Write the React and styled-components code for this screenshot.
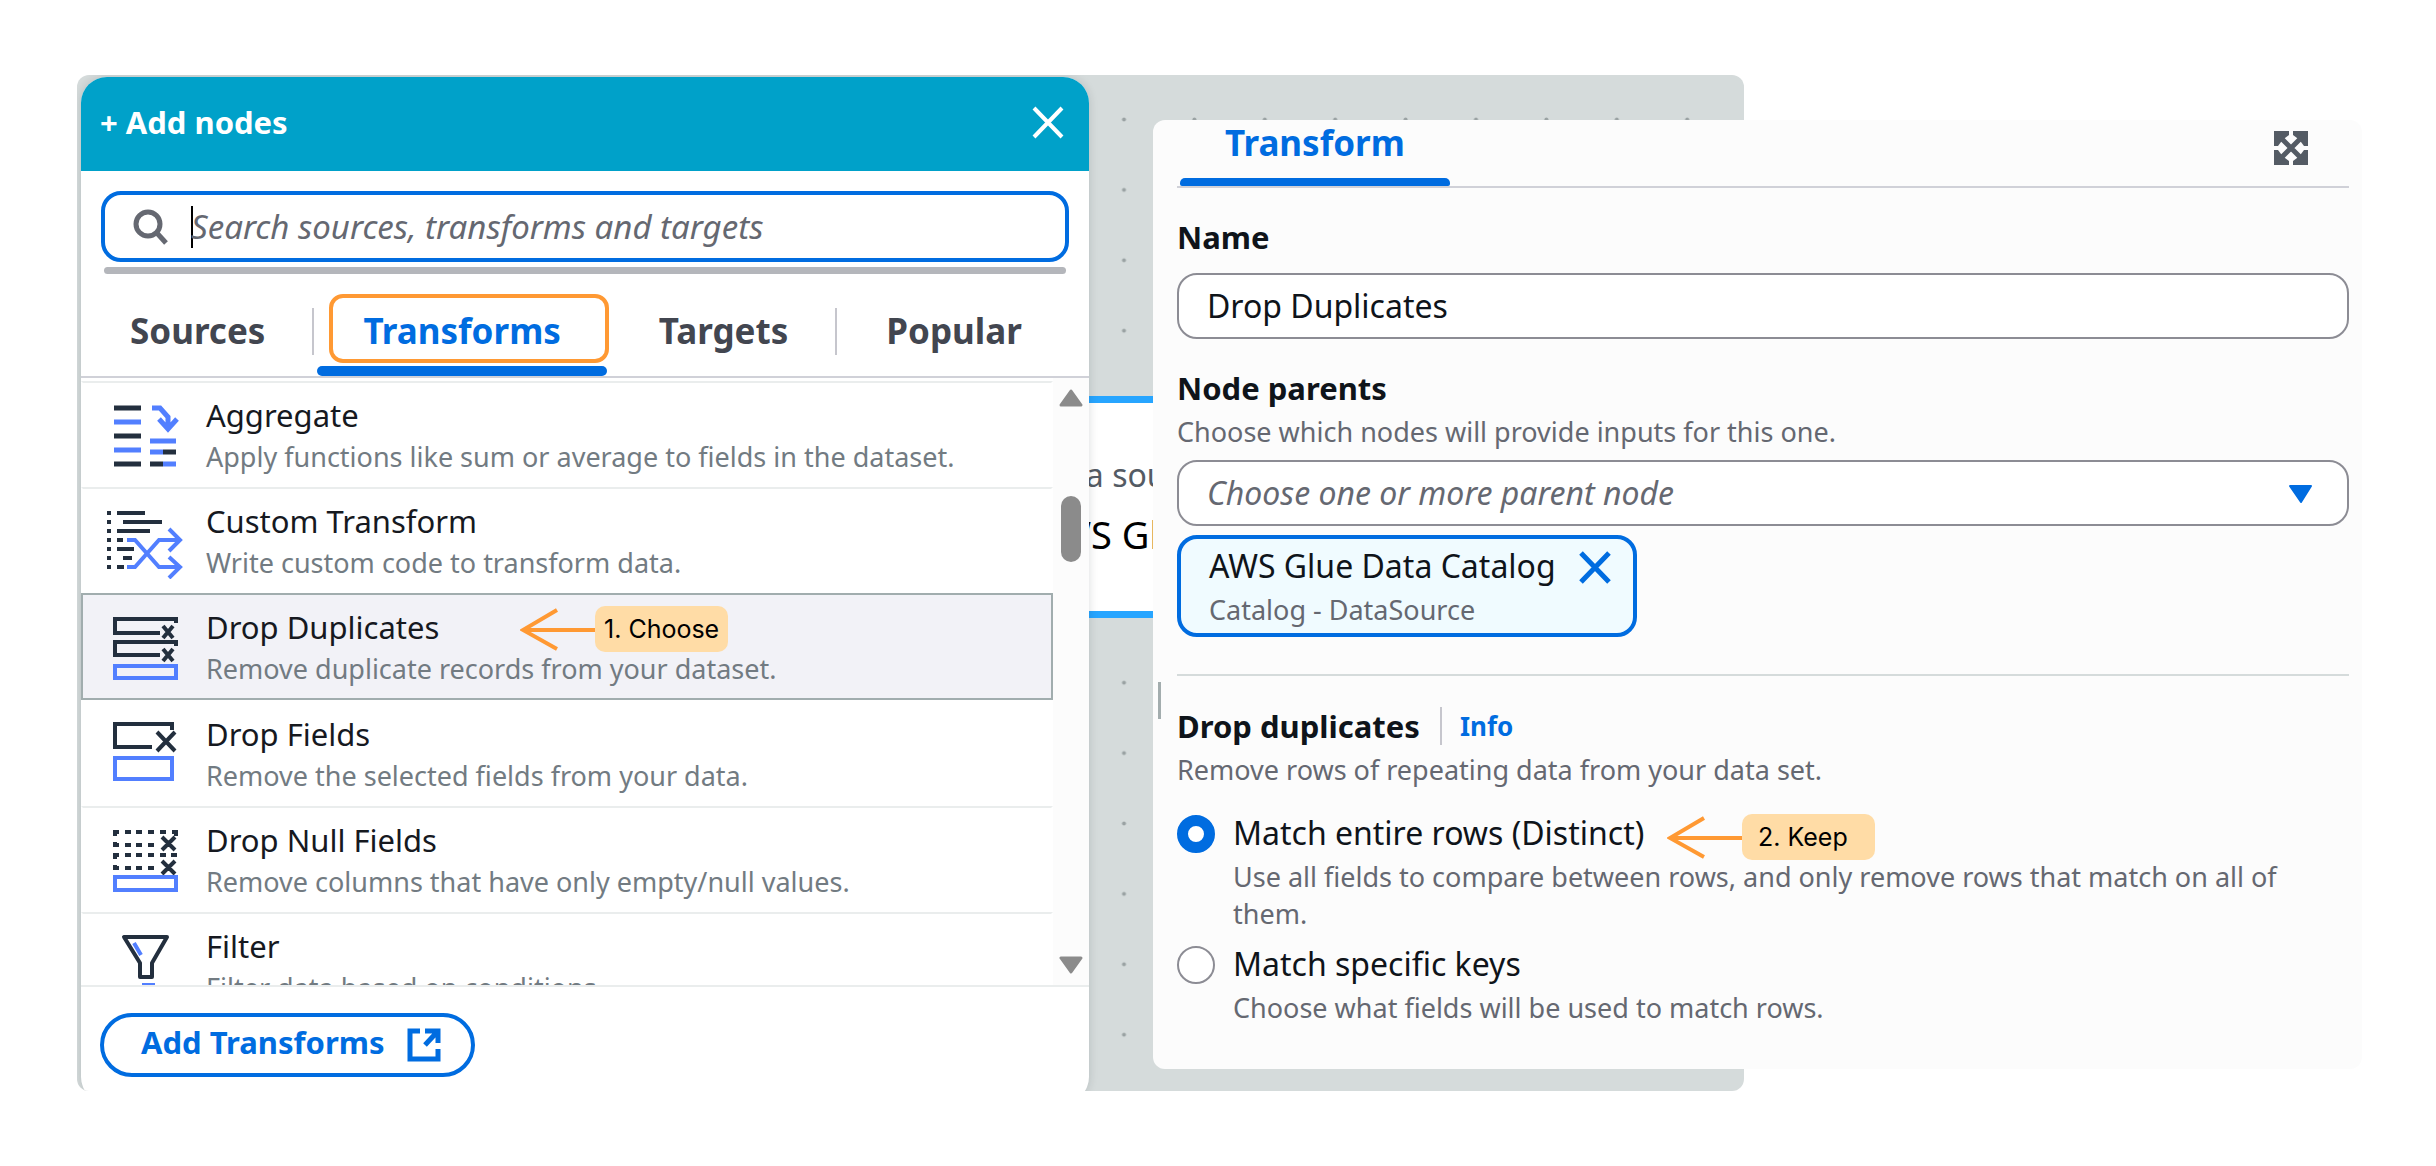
import React, { useState } from 'react';
import styled, { createGlobalStyle, css } from 'styled-components';

const color = {
  blue: '#006ce0',
  teal: '#00a1c9',
  orange: '#ff9933',
  peach: '#ffdca6',
  canvas: '#d5dbdb',
  panel: '#fcfcfc',
  ink: '#0f141a',
  listInk: '#16191f',
  tab: '#424650',
  muted: '#656871',
  listMuted: '#727b82',
  border: '#8c8c94',
  rule: '#d0d1d8',
  faint: '#eaeded',
  iconDark: '#232f3e',
  iconBlue: '#527fff',
};

const GlobalStyle = createGlobalStyle`
  *, *::before, *::after { box-sizing: border-box; }
  body {
    margin: 0;
    background: #fff;
    color: ${color.ink};
    font-family: "Noto Sans", "Open Sans", sans-serif;
  }
  button, input, select { font: inherit; color: inherit; margin: 0; }
  button { border: 0; padding: 0; background: none; cursor: pointer; }
  svg { display: block; flex: none; }
`;

const Page = styled.main`
  padding: 75px 74px 75px 77px;
`;

const Stage = styled.div`
  display: grid;
  grid-template-columns: minmax(0, 1076fr) minmax(0, 591fr) minmax(0, 618fr);
  align-items: start;
`;

/* Graph canvas */

const Canvas = styled.section`
  grid-column: 1 / 3;
  grid-row: 1;
  position: relative;
  overflow: hidden;
  padding: 2px 4px 0;
  border-radius: 12px;
  background: ${color.canvas};
`;

const DotGrid = styled.svg`
  position: absolute;
  inset: 0;
  width: 100%;
  height: 100%;
`;

const GraphNode = styled.div`
  position: absolute;
  left: 860px;
  top: 321px;
  width: 560px;
  padding: 51px 0 53px 96px;
  border: solid #27a5ff;
  border-width: 7px 0;
  background: #fff;
  white-space: nowrap;
`;

const NodeKind = styled.div`
  font-size: 32px;
  line-height: 42px;
  color: #545b64;
`;

const NodeName = styled.div`
  margin-top: 14px;
  font-size: 38px;
  line-height: 48px;
  color: #000;
`;

/* Add nodes panel */

const AddPanel = styled.section`
  position: relative;
  width: 1008px;
  max-width: 100%;
  margin-bottom: -12px;
  overflow: hidden;
  border-radius: 26px;
  background: #fff;
  box-shadow: 0 0 10px rgba(0, 28, 36, 0.15);
`;

const PanelHeader = styled.header`
  display: flex;
  align-items: center;
  justify-content: space-between;
  height: 94px;
  padding: 0 25px 4px 19px;
  background: ${color.teal};
  color: #fff;
`;

const PanelTitle = styled.h2`
  margin: 0;
  font-size: 31px;
  line-height: 42px;
  font-weight: 700;
`;

const SearchBox = styled.label`
  display: flex;
  align-items: center;
  height: 71px;
  margin: 20px 20px 0;
  padding: 0 28px;
  border: 4px solid ${color.blue};
  border-radius: 20px;
`;

const Caret = styled.span`
  width: 2px;
  height: 42px;
  margin: 0 -2px 0 22px;
  background: #000;
`;

const SearchInput = styled.input`
  flex: 1;
  min-width: 0;
  height: 46px;
  padding: 0;
  border: 0;
  outline: 0;
  background: none;
  font-size: 33px;
  &::placeholder { color: ${color.muted}; opacity: 1; font-style: italic; }
`;

const HorizontalThumb = styled.div`
  height: 7px;
  margin: 5px 23px 0;
  border-radius: 4px;
  background: #b4b6bb;
`;

const Tabs = styled.nav`
  display: flex;
  height: 104px;
  border-bottom: 2px solid ${color.rule};
`;

const Tab = styled.button`
  position: relative;
  padding: 12px 49px 0;
  font-size: 35px;
  line-height: 46px;
  font-weight: 700;
  color: ${(p) => (p.$active ? color.blue : color.tab)};

  ${(p) => p.$divided && css`
    &::before {
      content: '';
      position: absolute;
      right: 0;
      top: 34px;
      width: 2px;
      height: 47px;
      background: #c6c6cd;
    }
  `}

  ${(p) => p.$active && css`
    &::after {
      content: '';
      position: absolute;
      left: 3px;
      right: 3px;
      bottom: 0;
      height: 10px;
      border-radius: 5px;
      background: ${color.blue};
    }
  `}
`;

const Highlight = styled.span`
  position: absolute;
  left: 15px;
  right: 1px;
  top: 20px;
  height: 69px;
  border: 4px solid ${color.orange};
  border-radius: 14px;
`;

const ListArea = styled.div`
  display: flex;
  height: 607px;
  overflow: hidden;
`;

const NodeList = styled.ul`
  flex: 1;
  min-width: 0;
  margin: 0;
  padding: 3px 0 0;
  list-style: none;
`;

const NodeRow = styled.li`
  position: relative;
  height: ${(p) => (p.$selected ? 107 : 106)}px;
  border: solid transparent;
  border-width: 2px 2px 0;
  border-top-color: ${(p) => (p.$afterSelected ? 'transparent' : color.faint)};
  ${(p) => p.$selected && css`
    border: 2px solid #a1adae;
    background: #f2f2f7;
  `}
`;

const RowButton = styled.button`
  display: flex;
  align-items: flex-start;
  gap: 22px;
  width: 100%;
  padding: 10px 0 0 23px;
  text-align: left;
`;

const RowIcon = styled.svg`
  margin-top: 2px;
  fill: none;
`;

const RowTitle = styled.span`
  display: block;
  font-size: 31px;
  line-height: 44px;
  color: ${color.listInk};
`;

const RowText = styled.span`
  display: block;
  font-size: 27px;
  line-height: 39px;
  color: ${color.listMuted};
`;

const Scrollbar = styled.div`
  display: flex;
  flex-direction: column;
  align-items: center;
  width: 36px;
  padding: 10px 0;
  background: ${color.panel};
`;

const ScrollThumb = styled.div`
  width: 20px;
  height: 66px;
  margin: 89px 0 auto;
  border-radius: 10px;
  background: #8b8b8b;
`;

const PanelFooter = styled.footer`
  padding: 26px 19px;
  border-top: 2px solid ${color.faint};
`;

const OutlineButton = styled.button`
  display: flex;
  align-items: center;
  gap: 22px;
  height: 64px;
  padding: 0 30px 0 37px;
  border: 4px solid ${color.blue};
  border-radius: 32px;
  font-size: 31px;
  font-weight: 700;
  color: ${color.blue};
`;

const ButtonText = styled.span`
  padding-bottom: 6px;
  line-height: 42px;
`;

/* Transform panel */

const TransformPanel = styled.section`
  grid-column: 2 / 4;
  grid-row: 1;
  position: relative;
  margin-top: 45px;
  padding: 0 13px 43px 24px;
  border-radius: 12px;
  background: ${color.panel};
`;

const DragHandle = styled.span`
  position: absolute;
  left: 5px;
  top: 562px;
  width: 3px;
  height: 37px;
  background: #a3adae;
`;

const TransformHeader = styled.header`
  display: flex;
  align-items: flex-start;
  justify-content: space-between;
  height: 68px;
  padding: 0 41px 0 3px;
  border-bottom: 2px solid ${color.rule};
`;

const TransformTab = styled.button`
  position: relative;
  height: 66px;
  padding: 0 45px 20px;
  font-size: 35px;
  line-height: 46px;
  font-weight: 700;
  color: ${color.blue};
  &::after {
    content: '';
    position: absolute;
    left: 0;
    right: 0;
    bottom: 0;
    height: 8px;
    border-radius: 5px 5px 2px 2px;
    background: ${color.blue};
  }
`;

const ExpandButton = styled.button`
  margin-top: 11px;
  color: #545b64;
`;

const Field = styled.div`
  display: flex;
  flex-direction: column;
  align-items: flex-start;
  margin-top: 28px;
`;

const labelText = css`
  margin: 0;
  font-size: 31px;
  line-height: 42px;
  font-weight: 700;
`;

const FieldLabel = styled.label`${labelText}`;

const SectionTitle = styled.h3`${labelText}`;

const Hint = styled.p`
  margin: 4px 0 0;
  font-size: 27px;
  line-height: 37px;
  color: ${color.muted};
`;

const controlBox = css`
  width: 100%;
  height: 66px;
  padding: 0 28px 2px;
  border: 2px solid ${color.border};
  border-radius: 20px;
  outline: 0;
  background: #fff;
  font-size: 32px;
`;

const TextInput = styled.input`
  ${controlBox}
  margin-top: 15px;
`;

const SelectWrap = styled.div`
  position: relative;
  width: 100%;
  margin-top: 10px;
`;

const Select = styled.select`
  ${controlBox}
  appearance: none;
  font-style: italic;
  color: ${color.muted};
`;

const SelectArrow = styled.svg`
  position: absolute;
  right: 36px;
  top: 24px;
  pointer-events: none;
`;

const Token = styled.div`
  display: flex;
  align-items: flex-start;
  gap: 23px;
  margin-top: 9px;
  padding: 6px 22px 5px 28px;
  border: 4px solid ${color.blue};
  border-radius: 20px;
  background: #f0fbff;
`;

const TokenName = styled.div`
  font-size: 32px;
  line-height: 42px;
`;

const TokenRemove = styled.button`
  margin-top: 6px;
  color: ${color.blue};
`;

const Divider = styled.hr`
  height: 2px;
  margin: 37px 0 29px;
  border: 0;
  background: ${color.canvas};
`;

const SectionHead = styled.div`
  display: flex;
  align-items: center;
`;

const InfoLink = styled.a`
  margin-left: 20px;
  padding-left: 18px;
  border-left: 2px solid #c6c6cd;
  font-size: 26px;
  line-height: 38px;
  font-weight: 700;
  color: ${color.blue};
  text-decoration: none;
`;

const Options = styled.div`
  display: flex;
  flex-direction: column;
  gap: 11px;
  margin-top: 24px;
`;

const Option = styled.div`
  display: flex;
  align-items: flex-start;
  gap: 18px;
`;

const OptionBody = styled.div`
  position: relative;
  flex: 1;
  min-width: 0;
`;

const Radio = styled.input`
  appearance: none;
  flex: none;
  width: 38px;
  height: 38px;
  margin-top: 3px;
  border: 2px solid ${color.border};
  border-radius: 50%;
  background: #fff;
  &:checked { border: 11px solid ${color.blue}; }
`;

const OptionLabel = styled.label`
  display: block;
  font-size: 32px;
  line-height: 42px;
`;

/* Step callouts */

const CalloutBox = styled.div`
  position: absolute;
  left: ${(p) => p.$left}px;
  top: ${(p) => p.$top}px;
  display: flex;
  align-items: center;
`;

const CalloutText = styled.span`
  width: 133px;
  padding-left: ${(p) => p.$inset}px;
  border-radius: 10px;
  background: ${color.peach};
  font-family: Inter, "Liberation Sans", sans-serif;
  font-size: 25px;
  line-height: 46px;
  color: #000;
  white-space: nowrap;
`;

function Callout({ left, top, inset, children }) {
  return (
    <CalloutBox $left={left} $top={top}>
      <svg width="75" height="46" viewBox="0 0 75 46" fill="none" stroke={color.orange} strokeWidth="4" aria-hidden="true">
        <path d="M75 24H3M37 4 3 24l34 19" />
      </svg>
      <CalloutText $inset={inset}>{children}</CalloutText>
    </CalloutBox>
  );
}

function Cross({ width }) {
  return (
    <svg width="32" height="33" viewBox="0 0 32 33" fill="none" stroke="currentColor" strokeWidth={width} aria-hidden="true">
      <path d="M2 2 30 31M30 2 2 31" />
    </svg>
  );
}

const D = color.iconDark;
const B = color.iconBlue;

const icons = {
  aggregate: (
    <g strokeWidth="5">
      <path stroke={D} d="M8 13h27M8 41h27M8 69h27M57 57h13M44 69h13" />
      <path stroke={B} d="M8 27h27M8 55h27M44 46h26M44 57h13M57 69h13M46 13h8l8 9v13M53 24l9 10 9-10" />
    </g>
  ),
  custom: (
    <g strokeWidth="4">
      <path stroke={D} d="M1 12h4M1 21h4M1 30h4M1 39h4M1 48h4M1 57h4M1 66h4M11 12h28M17 21h39M11 30h33M11 39h6M11 48h17M17 57h9M11 66h7" />
      <path stroke={B} d="M21 39h8l24 27h21M21 66h8l24-27h21M63 28l11 11-11 11M63 56l11 10-11 11" />
    </g>
  ),
  duplicates: (
    <g strokeWidth="4">
      <path stroke={D} d="M70 16v-4H9v14h45M70 39v-4H9v13h45M57 19l10 12M67 19 57 31M57 42l10 12M67 42 57 54" />
      <path stroke={B} d="M9 59h61v12H9z" />
    </g>
  ),
  fields: (
    <g strokeWidth="4">
      <path stroke={D} d="M66 16v-6H9v23h37M51 18l18 19M69 18 51 37" />
      <path stroke={B} d="M9 44h57v21H9z" />
    </g>
  ),
  nulls: (
    <g strokeWidth="4">
      <path stroke={D} d="M13 12H9v4M19 12h6M30 12h6M42 12h6M54 12h6M66 12h4v4M9 22v3h4M19 25h6M30 25h6M42 25h6M13 35H9v4M19 35h6M30 35h6M42 35h6M54 35h6M65 35h6M9 45v3h4M19 48h6M30 48h6M42 48h6M56 17l13 13M69 17 56 30M56 41l13 13M69 41 56 54" />
      <path stroke={B} d="M9 57h61v13H9z" />
    </g>
  ),
  filter: (
    <g strokeWidth="4" strokeLinejoin="round">
      <path stroke={D} d="M18 11h43L46 37v14H34V37z" />
      <path stroke={B} d="M28 17l7 12M36 59h13" />
    </g>
  ),
};

const transforms = [
  { icon: 'aggregate', name: 'Aggregate', text: 'Apply functions like sum or average to fields in the dataset.' },
  { icon: 'custom', name: 'Custom Transform', text: 'Write custom code to transform data.' },
  { icon: 'duplicates', name: 'Drop Duplicates', text: 'Remove duplicate records from your dataset.', selected: true },
  { icon: 'fields', name: 'Drop Fields', text: 'Remove the selected fields from your data.' },
  { icon: 'nulls', name: 'Drop Null Fields', text: 'Remove columns that have only empty/null values.' },
  { icon: 'filter', name: 'Filter', text: 'Filter data based on conditions.' },
];

function AddNodes() {
  return (
    <AddPanel aria-label="Add nodes">
      <PanelHeader>
        <PanelTitle>+ Add nodes</PanelTitle>
        <button type="button" aria-label="Close">
          <Cross width="4" />
        </button>
      </PanelHeader>

      <SearchBox>
        <svg width="36" height="36" viewBox="0 0 36 36" fill="none" stroke={color.muted} strokeWidth="5" aria-hidden="true">
          <circle cx="15" cy="15" r="12" />
          <path d="M23 23l10 11" />
        </svg>
        <Caret />
        <SearchInput type="text" aria-label="Search nodes" placeholder="Search sources, transforms and targets" />
      </SearchBox>
      <HorizontalThumb />

      <Tabs>
        <Tab type="button" $divided>Sources</Tab>
        <Tab type="button" $active>
          Transforms
          <Highlight />
        </Tab>
        <Tab type="button" $divided>Targets</Tab>
        <Tab type="button">Popular</Tab>
      </Tabs>

      <ListArea>
        <NodeList>
          {transforms.map((t, i) => (
            <NodeRow key={t.name} $selected={t.selected} $afterSelected={transforms[i - 1]?.selected}>
              <RowButton type="button">
                <RowIcon width="78" height="78" viewBox="0 0 78 78" aria-hidden="true">{icons[t.icon]}</RowIcon>
                <span>
                  <RowTitle>{t.name}</RowTitle>
                  <RowText>{t.text}</RowText>
                </span>
              </RowButton>
              {t.selected && <Callout left={437} top={11} inset={9}>1. Choose</Callout>}
            </NodeRow>
          ))}
        </NodeList>
        <Scrollbar aria-hidden="true">
          <svg width="24" height="19" viewBox="0 0 24 19" fill="#8b8b8b" stroke="#8b8b8b" strokeWidth="3" strokeLinejoin="round">
            <path d="M12 3 22 17H2z" />
          </svg>
          <ScrollThumb />
          <svg width="24" height="19" viewBox="0 0 24 19" fill="#8b8b8b" stroke="#8b8b8b" strokeWidth="3" strokeLinejoin="round">
            <path d="M12 16 2 2h20z" />
          </svg>
        </Scrollbar>
      </ListArea>

      <PanelFooter>
        <OutlineButton type="button">
          <ButtonText>Add Transforms</ButtonText>
          <svg width="34" height="34" viewBox="0 0 34 34" fill="none" stroke="currentColor" strokeWidth="5" aria-hidden="true">
            <path d="M13 3H3v28h28V21M18 3h13v12M31 3 18 17" />
          </svg>
        </OutlineButton>
      </PanelFooter>
    </AddPanel>
  );
}

function TransformSettings() {
  const [name, setName] = useState('Drop Duplicates');
  const [mode, setMode] = useState('rows');

  return (
    <TransformPanel aria-label="Transform">
      <DragHandle />
      <TransformHeader>
        <TransformTab type="button">Transform</TransformTab>
        <ExpandButton type="button" aria-label="Expand panel">
          <svg width="34" height="34" viewBox="0 0 34 34" fill="currentColor" stroke="currentColor" aria-hidden="true">
            <path stroke="none" d="M0 0h15v4l-4 3-4 4-3 4H0zM34 0H19v4l4 3 4 4 3 4h4zM0 34h15v-4l-4-3-4-4-3-4H0zM34 34H19v-4l4-3 4-4 3-4h4z" />
            <path strokeWidth="5" d="M4 4l26 26M30 4 4 30" />
          </svg>
        </ExpandButton>
      </TransformHeader>

      <Field>
        <FieldLabel htmlFor="node-name">Name</FieldLabel>
        <TextInput id="node-name" type="text" value={name} onChange={(e) => setName(e.target.value)} />
      </Field>

      <Field>
        <FieldLabel htmlFor="node-parents">Node parents</FieldLabel>
        <Hint>Choose which nodes will provide inputs for this one.</Hint>
        <SelectWrap>
          <Select id="node-parents" defaultValue="">
            <option value="">Choose one or more parent node</option>
          </Select>
          <SelectArrow width="25" height="20" viewBox="0 0 25 20" fill={color.blue} stroke={color.blue} strokeWidth="2" strokeLinejoin="round" aria-hidden="true">
            <path d="M13 18 2 2h21z" />
          </SelectArrow>
        </SelectWrap>
        <Token>
          <div>
            <TokenName>AWS Glue Data Catalog</TokenName>
            <Hint>Catalog - DataSource</Hint>
          </div>
          <TokenRemove type="button" aria-label="Remove AWS Glue Data Catalog">
            <Cross width="5" />
          </TokenRemove>
        </Token>
      </Field>

      <Divider />

      <SectionHead>
        <SectionTitle>Drop duplicates</SectionTitle>
        <InfoLink href="#info">Info</InfoLink>
      </SectionHead>
      <Hint>Remove rows of repeating data from your data set.</Hint>

      <Options>
        <Option>
          <Radio type="radio" id="match-rows" name="match" checked={mode === 'rows'} onChange={() => setMode('rows')} />
          <OptionBody>
            <OptionLabel htmlFor="match-rows">Match entire rows (Distinct)</OptionLabel>
            <Hint>Use all fields to compare between rows, and only remove rows that match on all of them.</Hint>
            <Callout left={434} top={2} inset={16}>2. Keep</Callout>
          </OptionBody>
        </Option>
        <Option>
          <Radio type="radio" id="match-keys" name="match" checked={mode === 'keys'} onChange={() => setMode('keys')} />
          <OptionBody>
            <OptionLabel htmlFor="match-keys">Match specific keys</OptionLabel>
            <Hint>Choose what fields will be used to match rows.</Hint>
          </OptionBody>
        </Option>
      </Options>
    </TransformPanel>
  );
}

export default function App() {
  return (
    <Page>
      <GlobalStyle />
      <Stage>
        <Canvas aria-label="Job graph">
          <DotGrid aria-hidden="true">
            <defs>
              <pattern id="dots" x="26.2" y="9.3" width="70.4" height="70.4" patternUnits="userSpaceOnUse">
                <circle cx="35.2" cy="35.2" r="2" fill="#9aa2a3" />
              </pattern>
            </defs>
            <rect width="100%" height="100%" fill="url(#dots)" />
          </DotGrid>
          <GraphNode>
            <NodeKind>Data source</NodeKind>
            <NodeName>AWS Glue</NodeName>
          </GraphNode>
          <AddNodes />
        </Canvas>
        <TransformSettings />
      </Stage>
    </Page>
  );
}
